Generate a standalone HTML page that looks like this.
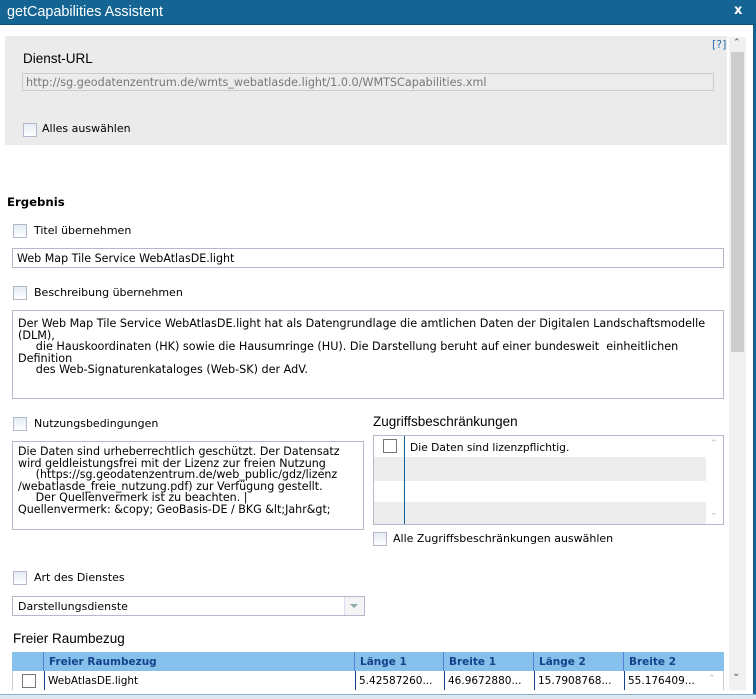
<!DOCTYPE html>
<html><head><meta charset="utf-8"><style>
*{margin:0;padding:0;box-sizing:border-box}
body{width:756px;height:699px;overflow:hidden;background:#fff;font-family:"DejaVu Sans","Liberation Sans",sans-serif;font-size:11px;color:#000;position:relative}
.a{position:absolute}
.cb{position:absolute;width:14px;height:14px;border:1px solid #b5b8c8;background:linear-gradient(#e4ecf4,#fff)}
.lbl{position:absolute;font-size:11px;white-space:nowrap}
.h{font-family:"Liberation Sans",sans-serif;font-size:13.5px}
.box{position:absolute;border:1px solid #b5b8c8;background:#fff}
pre{font-family:"DejaVu Sans",sans-serif;font-size:11.2px;line-height:11.5px}
.th{position:absolute;top:0;height:19px;border-left:1px solid #5a7fd8;font-weight:bold;color:#15428b;font-size:10.5px;padding:4px 0 0 5px;white-space:nowrap}
.td{position:absolute;top:0;height:19px;border-left:1px solid #15428b;font-size:10.5px;padding:4px 0 0 3px;white-space:nowrap}
</style></head><body>
<div class="a" style="left:0;top:0;width:756px;height:25px;background:#156594;border-bottom:1px solid #0f4f75"></div>
<div class="a" style="left:7px;top:4px;color:#fff;font-family:'Liberation Sans',sans-serif;font-size:14.4px">getCapabilities Assistent</div>
<div class="a" style="left:734px;top:3px;color:#fff;font-weight:bold;font-size:13px">x</div>
<div class="a" style="left:753px;top:25px;width:3px;height:674px;background:#156594"></div>
<div class="a" style="left:0;top:694px;width:756px;height:5px;background:#dfe7ef;border-top:1px solid #8fb0cc"></div>

<div class="a" style="left:5px;top:36px;width:722px;height:109px;background:#ebebeb"></div>
<div class="a" style="left:712px;top:38px;color:#2a6fb0;font-size:11px">[?]</div>
<div class="lbl h" style="left:23px;top:51px">Dienst-URL</div>
<div class="box" style="left:22px;top:73px;width:692px;height:18px;background:#ececec;border-color:#ccc"></div>
<div class="lbl" style="left:26px;top:76px;color:#777;font-size:11.2px">http://sg.geodatenzentrum.de/wmts_webatlasde.light/1.0.0/WMTSCapabilities.xml</div>
<div class="cb" style="left:23px;top:123px"></div>
<div class="lbl" style="left:42px;top:122px">Alles auswählen</div>

<div class="a" style="left:729px;top:37px;width:17px;height:653px;background:#f0f0f0"></div>
<div class="a" style="left:731px;top:52px;width:13px;height:300px;background:#cdcdcd"></div>
<div class="a" style="left:733px;top:38px;font-size:9px;color:#555">&#8963;</div>
<div class="a" style="left:732px;top:668px;font-size:10px;color:#555">&#8964;</div>

<div class="lbl" style="left:7px;top:195px;font-weight:bold;font-size:11.7px">Ergebnis</div>
<div class="cb" style="left:13px;top:224px"></div>
<div class="lbl" style="left:34px;top:224px">Titel übernehmen</div>
<div class="box" style="left:12px;top:248px;width:712px;height:20px"></div>
<div class="lbl" style="left:17px;top:252px;font-size:11.1px">Web Map Tile Service WebAtlasDE.light</div>
<div class="cb" style="left:13px;top:286px"></div>
<div class="lbl" style="left:34px;top:286px">Beschreibung übernehmen</div>
<div class="box" style="left:12px;top:310px;width:712px;height:89px"></div>
<pre class="a" style="left:18px;top:318px">Der Web Map Tile Service WebAtlasDE.light hat als Datengrundlage die amtlichen Daten der Digitalen Landschaftsmodelle
(DLM),
     die Hauskoordinaten (HK) sowie die Hausumringe (HU). Die Darstellung beruht auf einer bundesweit  einheitlichen
Definition
     des Web-Signaturenkataloges (Web-SK) der AdV.</pre>

<div class="cb" style="left:13px;top:417px"></div>
<div class="lbl" style="left:34px;top:417px">Nutzungsbedingungen</div>
<div class="box" style="left:12px;top:441px;width:352px;height:89px"></div>
<pre class="a" style="left:18px;top:446px;font-size:11.1px">Die Daten sind urheberrechtlich geschützt. Der Datensatz
wird geldleistungsfrei mit der Lizenz zur freien Nutzung
     (https://sg.geodatenzentrum.de/web_public/gdz/lizenz
/webatlasde_freie_nutzung.pdf) zur Verfügung gestellt.
     Der Quellenvermerk ist zu beachten. |
Quellenvermerk: &amp;copy; GeoBasis-DE / BKG &amp;lt;Jahr&amp;gt;</pre>

<div class="lbl h" style="left:373px;top:414px">Zugriffsbeschränkungen</div>
<div class="box" style="left:373px;top:435px;width:351px;height:90px;overflow:hidden">
 <div class="a" style="left:0;top:21px;width:332px;height:24px;background:#ededed"></div>
 <div class="a" style="left:0;top:66px;width:332px;height:22px;background:#ededed"></div>
 <div class="a" style="left:30px;top:0;width:1px;height:88px;background:#15629a"></div>
 <div class="a" style="left:9px;top:3px;width:14px;height:14px;border:1px solid #777;background:#fff"></div>
 <div class="lbl" style="left:36px;top:5px;font-size:10.7px">Die Daten sind lizenzpflichtig.</div>
 <div class="a" style="left:336px;top:3px;font-size:9px;color:#bbb">&#8963;</div>
 <div class="a" style="left:336px;top:72px;font-size:9px;color:#bbb">&#8964;</div>
</div>
<div class="cb" style="left:373px;top:532px"></div>
<div class="lbl" style="left:393px;top:532px">Alle Zugriffsbeschränkungen auswählen</div>

<div class="cb" style="left:13px;top:571px"></div>
<div class="lbl" style="left:34px;top:571px">Art des Dienstes</div>
<div class="box" style="left:12px;top:596px;width:353px;height:20px"></div>
<div class="a" style="left:344px;top:597px;width:20px;height:18px;border-left:1px solid #dde;background:#f4f4f4"></div>
<div class="a" style="left:350px;top:604px;width:0;height:0;border-left:4px solid transparent;border-right:4px solid transparent;border-top:4px solid #8aa"></div>
<div class="lbl" style="left:18px;top:600px;font-size:11px">Darstellungsdienste</div>

<div class="lbl h" style="left:13px;top:631px">Freier Raumbezug</div>
<div class="a" style="left:12px;top:652px;width:712px;height:19px;background:#85c1ea">
 <div class="th" style="left:31px">Freier Raumbezug</div>
 <div class="th" style="left:342px">Länge 1</div>
 <div class="th" style="left:431px">Breite 1</div>
 <div class="th" style="left:521px">Länge 2</div>
 <div class="th" style="left:611px">Breite 2</div>
</div>
<div class="a" style="left:12px;top:671px;width:712px;height:19px;background:#fff;border-left:1px solid #ccc;border-right:1px solid #ccc">
 <div class="a" style="left:9px;top:3px;width:14px;height:14px;border:1px solid #777"></div>
 <div class="td" style="left:31px">WebAtlasDE.light</div>
 <div class="td" style="left:342px">5.42587260...</div>
 <div class="td" style="left:431px">46.9672880...</div>
 <div class="td" style="left:521px">15.7908768...</div>
 <div class="td" style="left:611px">55.176409...</div>
 <div class="a" style="left:695px;top:3px;font-size:9px;color:#bbb">&#8963;</div>
</div>
</body></html>
